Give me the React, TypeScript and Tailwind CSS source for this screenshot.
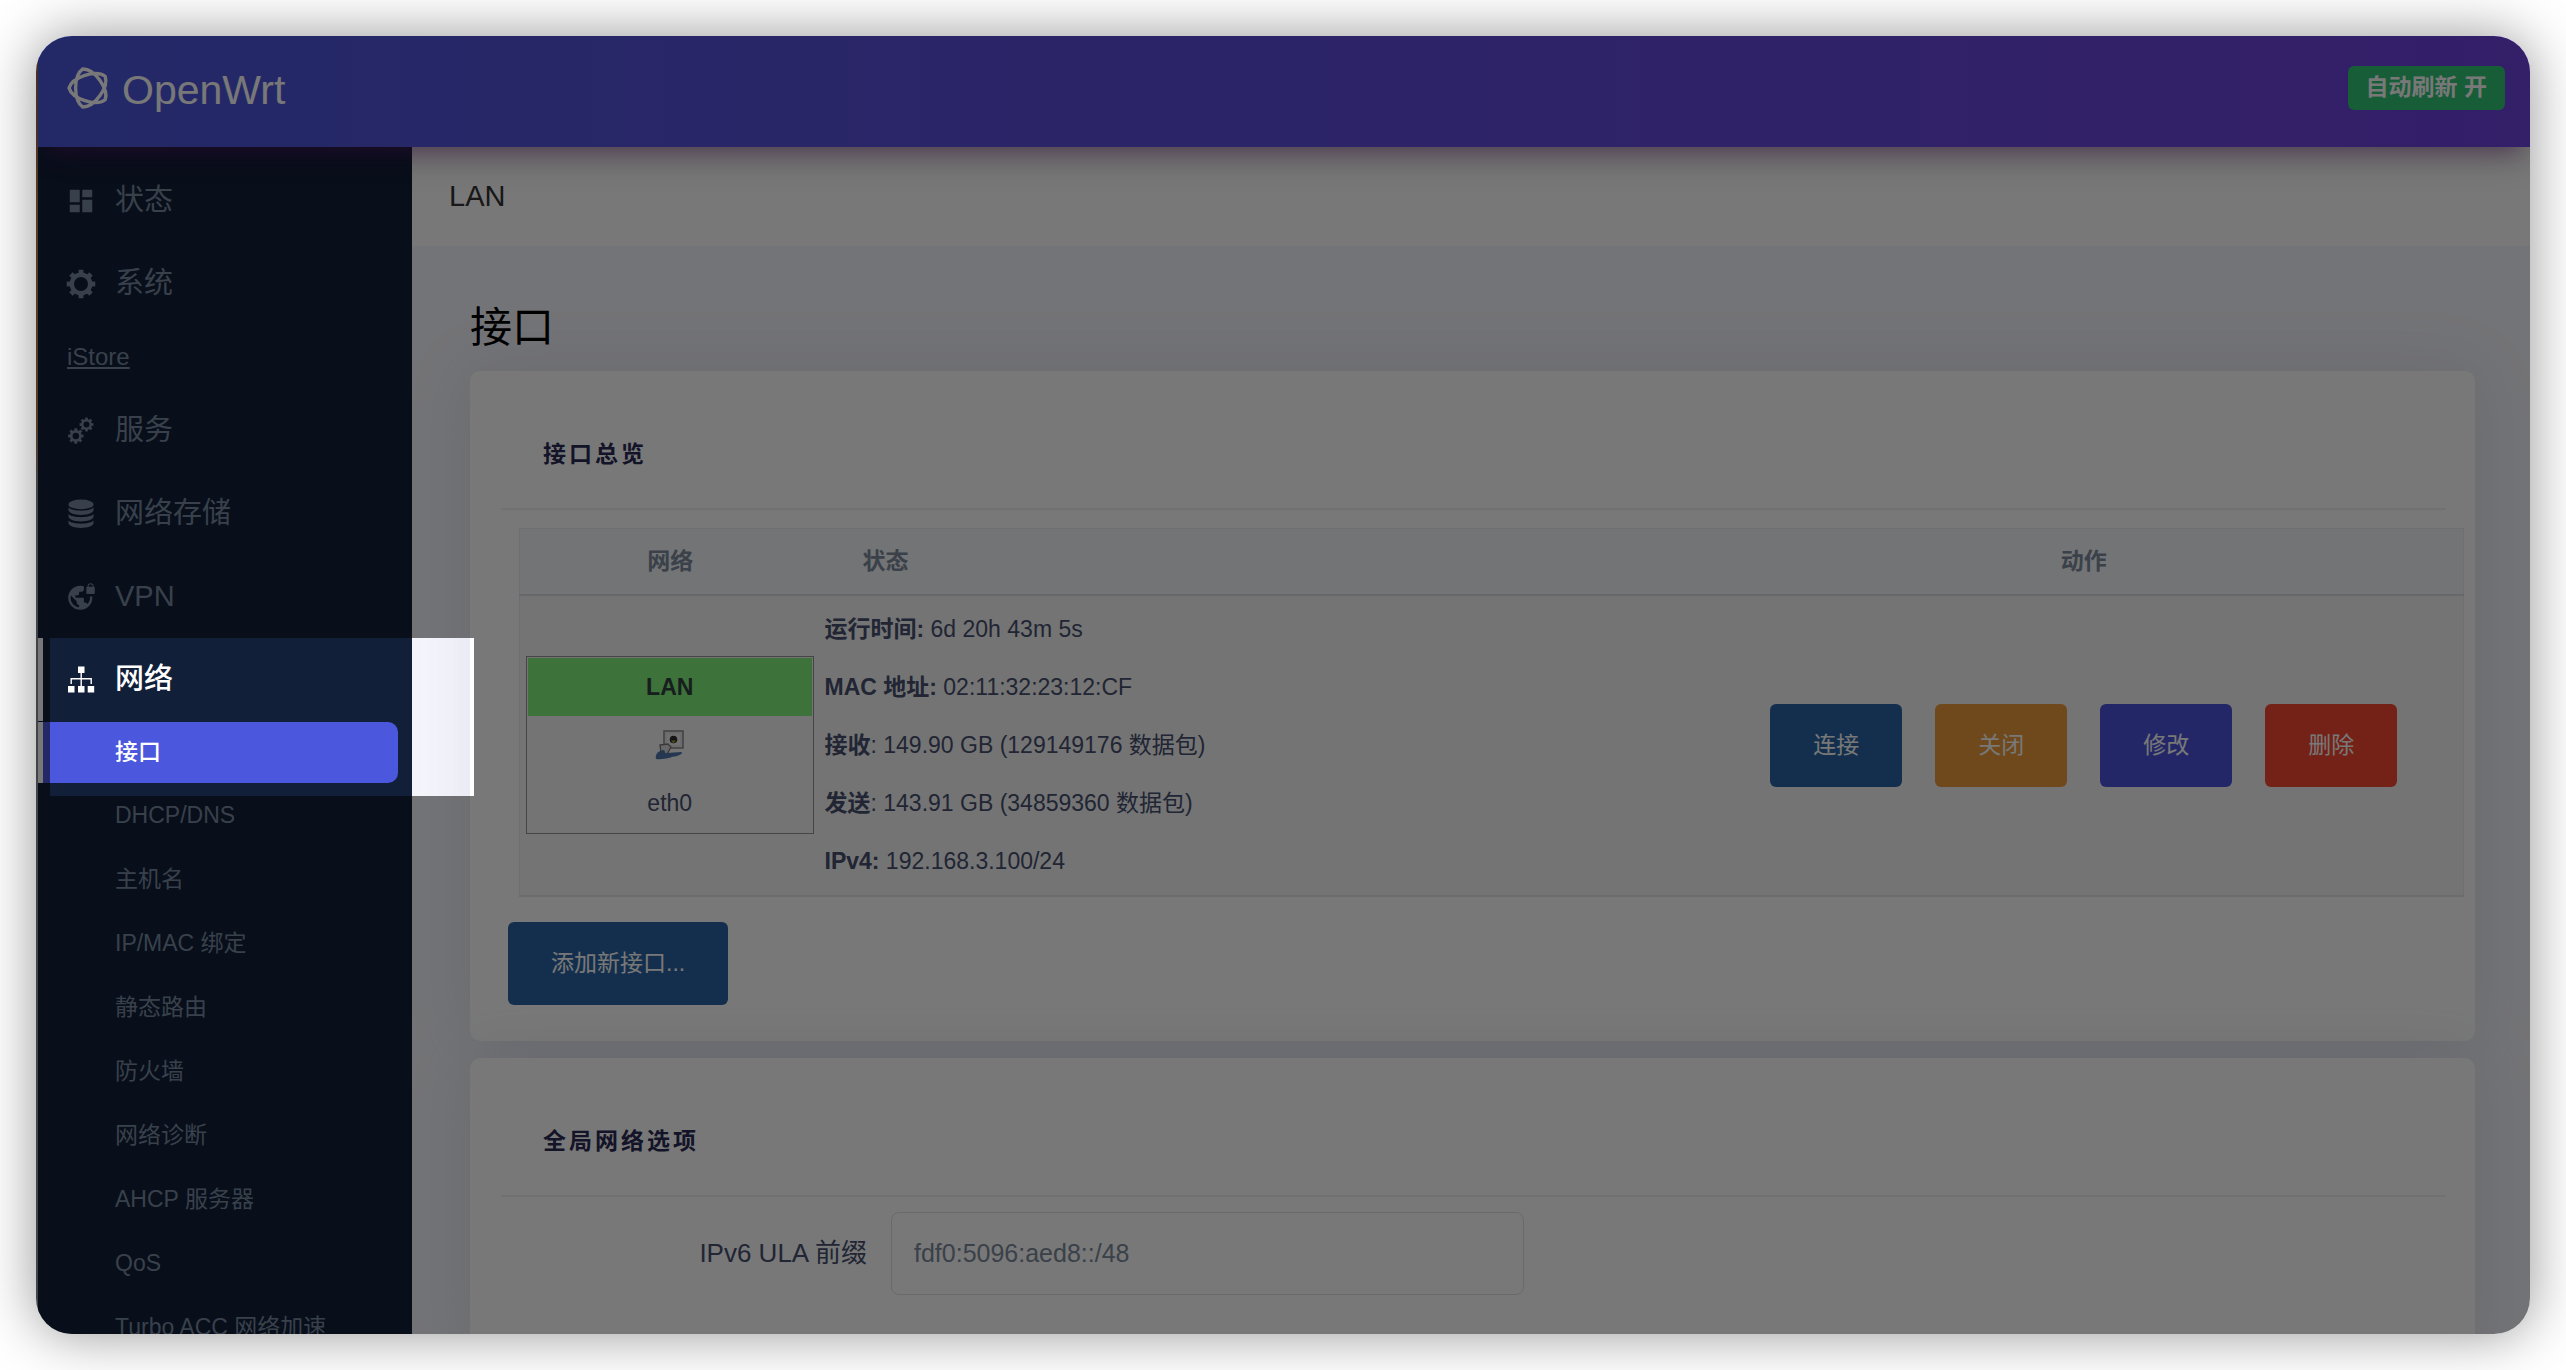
import type { ReactNode } from "react";
import { MdDashboard, MdVpnLock } from "react-icons/md";

// Five-pointed star drawn in one stroke, with its sides bulging outwards
const knotPath = () => {
  const point = (radius: number, degrees: number) => {
    const angle = (degrees * Math.PI) / 180;
    return `${(24 + radius * Math.cos(angle)).toFixed(2)} ${(24 + radius * Math.sin(angle)).toFixed(2)}`;
  };
  let d = `M${point(20, 180)}`;
  for (let i = 0; i < 5; i++) {
    const from = 180 + i * 144;
    d += `C${point(20, from + 34)} ${point(20, from + 110)} ${point(20, from + 144)}`;
  }
  return `${d}Z`;
};

const LogoIcon = () => (
  <svg
    viewBox="0 0 48 48"
    className="size-12"
    fill="none"
    stroke="currentColor"
    strokeWidth="3.4"
    strokeLinejoin="round"
    aria-hidden="true"
  >
    <path d={knotPath()} />
  </svg>
);

const Cog = ({ cx, cy, r, width }: { cx: number; cy: number; r: number; width: number }) => (
  <g stroke="currentColor" fill="none">
    <circle cx={cx} cy={cy} r={r} strokeWidth={width} />
    {[0, 45, 90, 135, 180, 225, 270, 315].map((angle) => (
      <path
        key={angle}
        d={`M${cx} ${cy - r}V${cy - r - width * 1.15}`}
        strokeWidth={width * 1.1}
        transform={`rotate(${angle} ${cx} ${cy})`}
      />
    ))}
  </g>
);

const SettingsIcon = () => (
  <svg viewBox="0 0 30 30" className="size-[30px]" aria-hidden="true">
    <Cog cx={15} cy={15} r={9.2} width={4.4} />
  </svg>
);

const ServicesIcon = () => (
  <svg viewBox="0 0 30 30" className="size-[30px]" aria-hidden="true">
    <Cog cx={9.8} cy={20} r={4.6} width={2.7} />
    <Cog cx={20.5} cy={8.5} r={4.2} width={2.4} />
  </svg>
);

const DatabaseIcon = () => (
  <svg viewBox="0 0 30 30" className="size-[30px]" fill="currentColor" aria-hidden="true">
    <ellipse cx="15" cy="5.4" rx="12.5" ry="4.9" />
    {[8.5, 15, 21.5].map((y) => (
      <path key={y} d={`M2.500 ${y}C6 ${y + 4.2} 24 ${y + 4.2} 27.500 ${y}V${y + 2.8}C26.500 ${y + 9} 3.500 ${y + 9} 2.500 ${y + 2.8}Z`} />
    ))}
  </svg>
);

const NetworkIcon = () => (
  <svg viewBox="0 0 30 30" className="size-[30px]" fill="currentColor" aria-hidden="true">
    <path d="M12 1.500h6.500v6.500h-6.500zM2 21h6.500v6.500h-6.500zM12 21h6.500v6.500h-6.500zM21.700 21h6.500v6.500h-6.500z" />
    <path d="M15.200 8v13M5.200 19v-5.200h20v5.200" fill="none" stroke="currentColor" strokeWidth="1.400" />
  </svg>
);

// Small "wired port" image of the interface box
const EthernetIcon = () => (
  <svg viewBox="0 0 30 30" className="size-[30px]" aria-hidden="true">
    <rect x="9" y="1" width="19" height="17" fill="#e4e4e4" stroke="#8a8a8a" strokeWidth="1.500" />
    <rect x="12" y="4" width="13" height="11" fill="#f0f0f0" />
    <circle cx="18.500" cy="9.500" r="3.800" fill="#30302c" />
    <path d="M16 10.500h5l-2.500 3z" fill="#a39a3a" />
    <path d="M5 15l8-1 3 3-4 7-6-1z" fill="#dcdcdc" stroke="#777" strokeWidth="1.300" />
    <path d="M1 29c-1-5 2-8 7-9 3 0 1 4 4 3l14-1c3 1-1 3-4 4-7 1-12 4-21 3z" fill="#5277ad" />
  </svg>
);

const topItems: { label: string; icon: ReactNode }[] = [
  { label: "状态", icon: <MdDashboard className="size-[30px]" /> },
  { label: "系统", icon: <SettingsIcon /> },
];

const serviceItems: { label: string; icon: ReactNode }[] = [
  { label: "服务", icon: <ServicesIcon /> },
  { label: "网络存储", icon: <DatabaseIcon /> },
  { label: "VPN", icon: <MdVpnLock className="size-[29px]" /> },
];

const networkPages = [
  "DHCP/DNS",
  "主机名",
  "IP/MAC 绑定",
  "静态路由",
  "防火墙",
  "网络诊断",
  "AHCP 服务器",
  "QoS",
  "Turbo ACC 网络加速",
];

const lanStatus = [
  { name: "运行时间:", value: "6d 20h 43m 5s" },
  { name: "MAC 地址:", value: "02:11:32:23:12:CF" },
  { name: "接收", value: ": 149.90 GB (129149176 数据包)" },
  { name: "发送", value: ": 143.91 GB (34859360 数据包)" },
  { name: "IPv4:", value: "192.168.3.100/24" },
];

const actions = [
  { label: "连接", color: "bg-[#2964a5]" },
  { label: "关闭", color: "bg-[#ec9c3c]" },
  { label: "修改", color: "bg-[#4b54dc]" },
  { label: "删除", color: "bg-[#f64931]" },
];

const NavItem = ({ label, icon, active = false }: { label: string; icon: ReactNode; active?: boolean }) => (
  <a
    href="#"
    className={`flex h-[83px] items-center gap-[19px] border-l-[5px] pl-[23px] text-[29px] ${
      active ? "border-white font-medium text-white" : "border-transparent"
    }`}
  >
    <span className="flex w-[30px] justify-center">{icon}</span>
    {label}
  </a>
);

const Sidebar = () => (
  <nav className="w-[374px] shrink-0 overflow-hidden bg-[#121f39] pt-3 text-[#788a9f]">
    {topItems.map((item) => (
      <NavItem key={item.label} {...item} />
    ))}
    <a href="#" className="flex h-16 items-center pl-[29px] text-2xl underline underline-offset-2">
      iStore
    </a>
    {serviceItems.map((item) => (
      <NavItem key={item.label} {...item} />
    ))}
    <NavItem label="网络" icon={<NetworkIcon />} active />
    <a
      href="#"
      aria-current="page"
      className="mt-px mr-3.5 flex h-[61px] items-center rounded-r-[10px] border-l-[5px] border-white bg-[#4b57dc] pl-[72px] text-[23px] font-medium text-white"
    >
      接口
    </a>
    {networkPages.map((page) => (
      <a key={page} href="#" className="flex h-16 items-center pl-[77px] text-[23px]">
        {page}
      </a>
    ))}
  </nav>
);

const Card = ({ title, children }: { title: string; children: ReactNode }) => (
  <section className="mb-[17px] rounded-[10px] bg-white shadow-[0_0_64px_rgba(100,110,150,0.15)]">
    <h3 className="pt-[65px] pb-9 pl-[73px] text-[23px] leading-9 font-bold tracking-[3px] text-[#2b2b55]">{title}</h3>
    <div className="mr-[29px] ml-[31px] h-0.5 bg-[#eff0f2]" />
    {children}
  </section>
);

const InterfaceBox = () => (
  <div className="mr-[7px] ml-1.5 border border-[#949494] p-px text-center text-[23px]">
    <div className="bg-[#82f27c] leading-[58px] font-bold text-[#32403f]">LAN</div>
    <div className="flex h-[58px] items-center justify-center">
      <EthernetIcon />
    </div>
    <div className="leading-[58px]">eth0</div>
  </div>
);

const InterfaceTable = () => (
  <table className="mt-[18px] mr-[11px] ml-[49px] w-[calc(100%-60px)] table-fixed border border-[#e9ecef] text-[23px] text-[#46506f]">
    <thead className="h-[66px] border-b-2 border-[#d9dde4] bg-[#f4f6fa] text-[#7c8a9c]">
      <tr>
        <th className="w-[301px] font-bold">网络</th>
        <th className="pl-[42px] text-left font-bold">状态</th>
        <th className="w-[759px] font-bold">动作</th>
      </tr>
    </thead>
    <tbody>
      <tr className="border-b-2 border-[#e4e6e9] bg-[#f6f6f6]">
        <td>
          <InterfaceBox />
        </td>
        <td className="pt-1 pb-[5px] pl-1">
          {lanStatus.map(({ name, value }) => (
            <div key={name} className="leading-[58px]">
              <strong>{name}</strong>
              {value.startsWith(":") ? value : ` ${value}`}
            </div>
          ))}
        </td>
        <td>
          <div className="flex justify-center gap-[33px]">
            {actions.map(({ label, color }) => (
              <button key={label} type="button" className={`h-[83px] rounded-md px-[43px] text-white ${color}`}>
                {label}
              </button>
            ))}
          </div>
        </td>
      </tr>
    </tbody>
  </table>
);

const App = () => (
  <div className="h-screen bg-white p-9 font-['Liberation_Sans','Noto_Sans_CJK_SC',sans-serif]">
    <div className="relative flex h-full overflow-hidden rounded-[36px] shadow-[0_0_56px_rgba(0,0,0,0.42)]">
      {/* Edge of the window behind */}
      <div className="w-0.5 shrink-0 bg-linear-to-b from-[#b07a55] from-30% to-[#8c9499] to-35%" />

      <div className="flex min-w-0 flex-1 flex-col">
        <header className="z-10 flex h-[111px] shrink-0 items-center justify-between bg-linear-to-r from-[#4b57dc] to-[#6f42e0] pr-[25px] pb-2 pl-[27px] text-white shadow-[0_8px_40px_rgba(0,0,0,0.25),0_14px_20px_-10px_rgba(156,39,176,0.45)]">
          <a href="#" className="flex items-center gap-[9px] text-[41px]">
            <LogoIcon />
            <span className="pt-1.5">OpenWrt</span>
          </a>
          <button type="button" className="h-11 rounded-md bg-[#2fc578] px-[18px] text-[23px] font-bold">
            自动刷新 开
          </button>
        </header>

        <div className="flex min-h-0 flex-1">
          <Sidebar />
          <main className="min-w-0 flex-1 overflow-hidden bg-[#f5f6fc]">
            <h1 className="flex h-[99px] items-center bg-white pl-[37px] text-[29px] text-[#333]">LAN</h1>
            <div className="pr-[55px] pl-[58px]">
              <h2 className="pt-[57px] pb-[18px] text-[42px] leading-[50px] text-black">接口</h2>

              <Card title="接口总览">
                <InterfaceTable />
                <div className="pt-[25px] pb-9 pl-[38px]">
                  <button type="button" className="h-[83px] rounded-md bg-[#2964a5] px-[43px] text-[23px] text-white">
                    添加新接口...
                  </button>
                </div>
              </Card>

              <Card title="全局网络选项">
                <div className="flex items-center gap-6 pt-[15px] pb-16 text-[25px]">
                  <label htmlFor="ula-prefix" className="w-[397px] text-right text-[26px] text-[#46506f]">
                    IPv6 ULA 前缀
                  </label>
                  <input
                    id="ula-prefix"
                    type="text"
                    defaultValue="fdf0:5096:aed8::/48"
                    className="h-[83px] w-[633px] rounded-lg border border-[#dee2e6] bg-white px-[22px] text-[#7c8a9c]"
                  />
                </div>
              </Card>
            </div>
          </main>
        </div>
      </div>

      {/* Spotlight on the current menu entry, everything around it is dimmed */}
      <div className="pointer-events-none absolute top-[602px] left-3.5 z-20 h-[158px] w-[424px] shadow-[0_0_0_3000px_rgba(0,0,0,0.53)]" />
    </div>
  </div>
);

export default App;
